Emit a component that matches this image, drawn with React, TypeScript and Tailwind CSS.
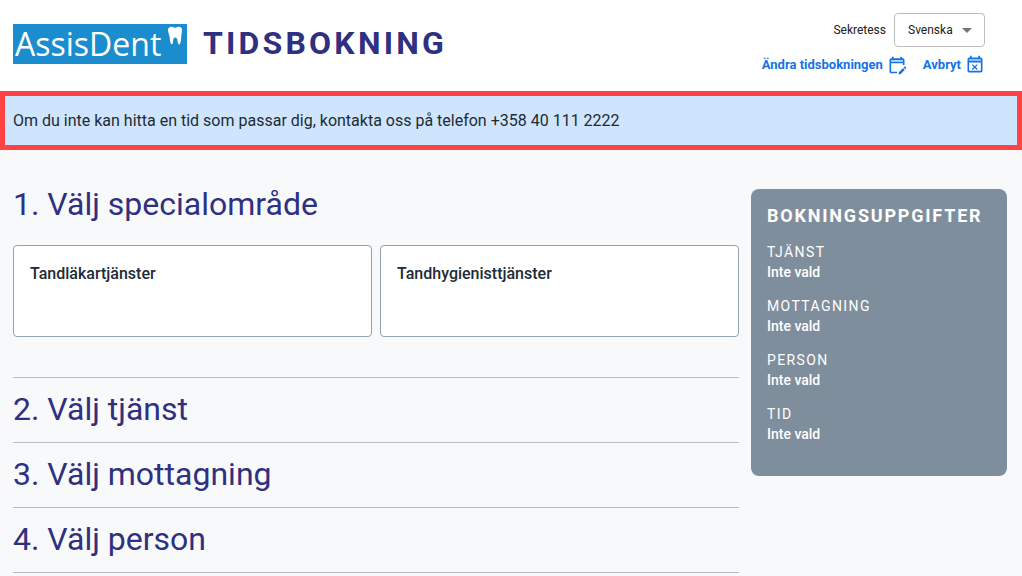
const steps = ['2. Välj tjänst', '3. Välj mottagning', '4. Välj person'];

const specialities = ['Tandläkartjänster', 'Tandhygienisttjänster'];

const bookingRows = ['Tjänst', 'Mottagning', 'Person', 'Tid'];

function Logo() {
    return (
        <a href="#" className="flex h-10 w-[174px] items-start justify-between bg-[#1b8dce] pr-1 pl-0.5 text-white">
            <span className="font-['Open_Sans'] text-[32px] leading-10">AssisDent</span>
            <svg className="mt-0.5 h-[19px] w-4 shrink-0" viewBox="0 0 16 19" fill="currentColor" aria-hidden="true">
                <path d="M1 3.500C1.500 1 4 .4 6 1.200c1.400.6 2.500.6 4 0C12.500.2 15 1 15 4c0 2.400-.5 4-.7 6.400-.2 2.800-.4 5.800-1.400 7.600-.5.8-1.400.5-1.700-.5-.7-2.200-.7-6.100-2.900-6.100s-2.100 2.900-2.500 5.300c-.3 1.700-1.300 2.200-2 .8C2.900 15.500 3 12.800 2.600 10.400 2.200 8 .6 6 1 3.500z" />
            </svg>
        </a>
    );
}

function EditCalendarIcon() {
    return (
        <svg className="size-5" viewBox="0 0 24 24" fill="currentColor" aria-hidden="true">
            <path d="M5 6h14v2H5z" opacity=".3" />
            <path d="M5 10h14v2h2V6c0-1.1-.9-2-2-2h-1V2h-2v2H8V2H6v2H5c-1.11 0-1.99.9-1.99 2L3 20a2 2 0 0 0 2 2h7v-2H5V10zm0-4h14v2H5V6zm17.84 10.28-.71.71-2.12-2.12.71-.71c.39-.39 1.02-.39 1.41 0l.71.71c.39.39.39 1.02 0 1.41zm-3.54-.7 2.12 2.12-5.3 5.3H14v-2.12l5.3-5.3z" />
        </svg>
    );
}

function CancelCalendarIcon() {
    return (
        <svg className="size-5" viewBox="0 0 24 24" fill="currentColor" aria-hidden="true">
            <path d="M5 5h14v3H5z" opacity=".3" />
            <path d="M9.31 18l2.44-2.44L14.19 18l1.06-1.06-2.44-2.44 2.44-2.44L14.19 11l-2.44 2.44L9.31 11l-1.06 1.06 2.44 2.44-2.44 2.44L9.31 18zM19 3h-1V1h-2v2H8V1H6v2H5c-1.11 0-1.99.9-1.99 2L3 19c0 1.1.89 2 2 2h14c1.1 0 2-.9 2-2V5c0-1.1-.9-2-2-2zm0 16H5V9h14v10zM5 7V5h14v2H5z" />
        </svg>
    );
}

function Header() {
    return (
        <header className="flex items-start justify-between bg-white pt-3 pr-[37px] pb-4 pl-[13px]">
            <div className="flex items-start gap-4 pt-3">
                <Logo />
                <h1 className="text-[32px] leading-[38px] font-bold tracking-[0.1em] text-[#303080]">TIDSBOKNING</h1>
            </div>
            <div className="flex flex-col items-end gap-2 pt-px">
                <div className="flex items-center gap-2 text-xs text-[#212121]">
                    <a href="#">Sekretess</a>
                    <div className="relative">
                        <select aria-label="Språk" className="h-[34px] w-[91px] appearance-none rounded border border-[#bdbdbd] bg-white pl-[13px] text-xs">
                            <option>Svenska</option>
                        </select>
                        <svg className="pointer-events-none absolute top-[15px] right-[13px] h-[5px] w-2.5" viewBox="0 0 10 5" fill="#757575" aria-hidden="true">
                            <path d="M0 0h10L5 5z" />
                        </svg>
                    </div>
                </div>
                <nav className="flex gap-4 text-[13px] leading-5 font-bold text-[#1373e6]">
                    <a href="#" className="flex gap-1">
                        Ändra tidsbokningen
                        <EditCalendarIcon />
                    </a>
                    <a href="#" className="flex gap-1">
                        Avbryt
                        <CancelCalendarIcon />
                    </a>
                </nav>
            </div>
        </header>
    );
}

function BookingDetails() {
    return (
        <aside className="w-64 shrink-0 rounded-lg bg-[#7f8e9c] px-4 pt-[15px] pb-8 text-white">
            <h2 className="mb-3.5 text-lg leading-6 font-bold tracking-[0.1em]">BOKNINGSUPPGIFTER</h2>
            <dl className="flex flex-col gap-3.5">
                {bookingRows.map((row) => (
                    <div key={row} className="text-sm">
                        <dt className="tracking-[0.1em] uppercase">{row}</dt>
                        <dd className="font-medium">Inte vald</dd>
                    </div>
                ))}
            </dl>
        </aside>
    );
}

export default function App() {
    return (
        <div className="min-h-screen bg-[#f8f9fb] font-[Roboto,sans-serif] text-[#212b36]">
            <Header />
            <div className="border-5 border-[#ff4343] bg-[#cfe5fe] px-2 py-3 text-base leading-[25px]">
                Om du inte kan hitta en tid som passar dig, kontakta oss på telefon +358 40 111 2222
            </div>
            <div className="flex items-start gap-3 pt-[39px] pr-[15px] pl-[13px]">
                <main className="min-w-0 flex-1">
                    <section className="pb-10">
                        <h2 className="mb-[26px] text-[32px] leading-[30px] text-[#303080]">1. Välj specialområde</h2>
                        <div className="grid grid-cols-2 gap-2">
                            {specialities.map((name) => (
                                <button key={name} type="button" className="flex h-[92px] rounded border border-[#94a3b1] bg-white px-4 py-4 text-left text-base font-medium">
                                    {name}
                                </button>
                            ))}
                        </div>
                    </section>
                    {steps.map((step) => (
                        <section key={step} className="border-t border-[#bdbdc0] pt-[11px] pb-[13px]">
                            <h2 className="text-[32px] leading-10 text-[#303080]">{step}</h2>
                        </section>
                    ))}
                    <hr className="border-[#bdbdc0]" />
                </main>
                <BookingDetails />
            </div>
        </div>
    );
}
